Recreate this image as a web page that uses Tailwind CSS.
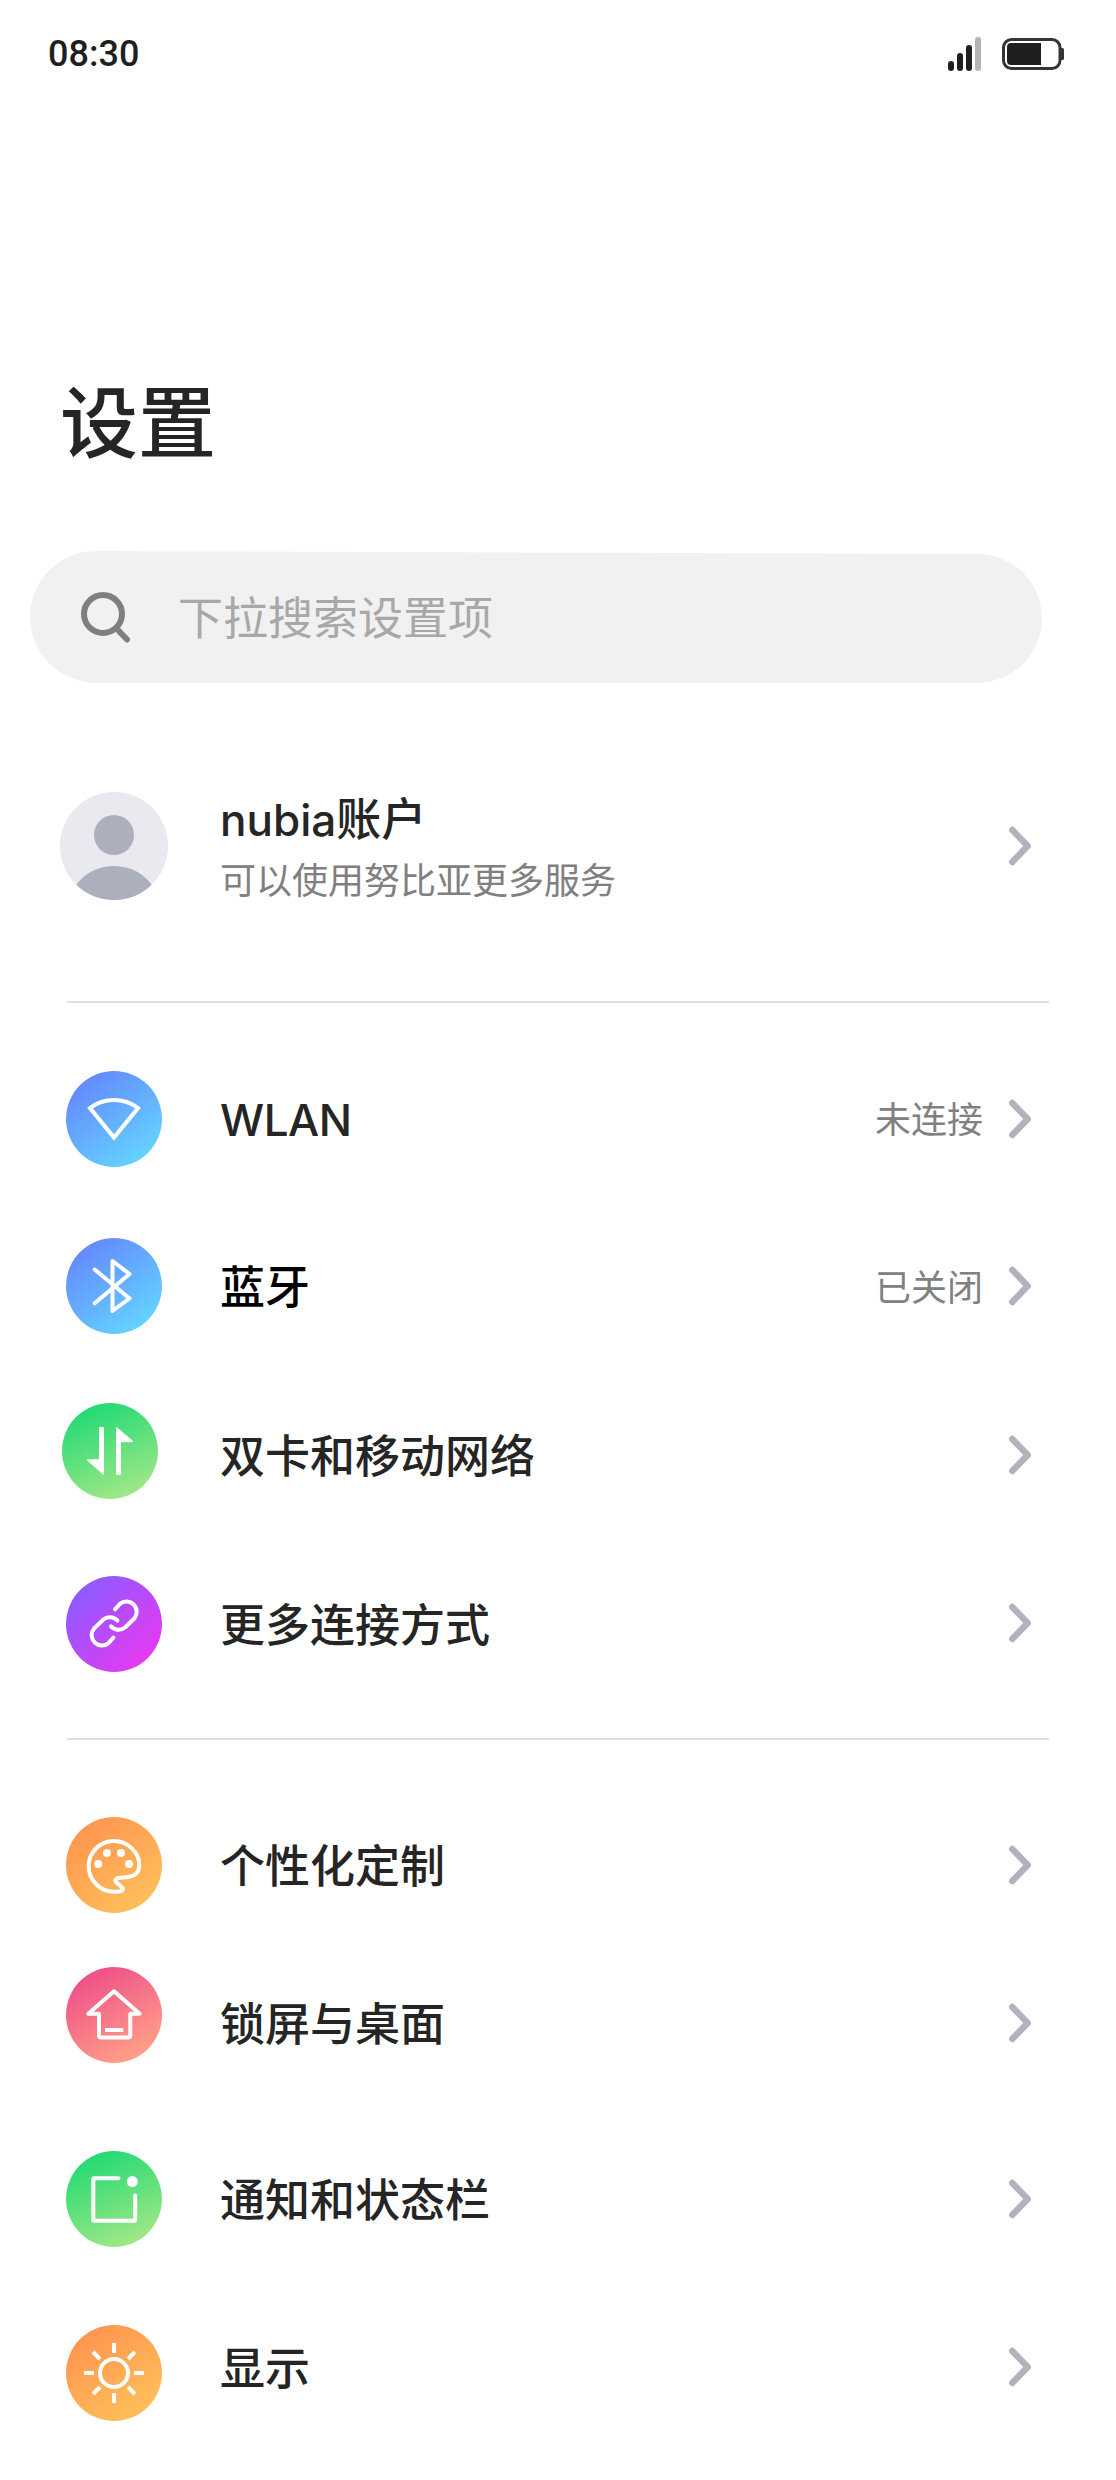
<!DOCTYPE html>
<html lang="zh-CN">
<head>
<meta charset="utf-8">
<title>设置</title>
<script src="https://cdn.jsdelivr.net/npm/@tailwindcss/browser@4"></script>
</head>
<body class="bg-white">
<svg class="absolute w-0 h-0">
  <defs>
    <linearGradient id="blue" x1=".15" y1=".05" x2=".8" y2=".95"><stop offset="0" stop-color="#6486fd"/><stop offset="1" stop-color="#64d5ff"/></linearGradient>
    <linearGradient id="green" x1=".25" y1="0" x2=".65" y2="1"><stop offset="0" stop-color="#1cd973"/><stop offset="1" stop-color="#a3e887"/></linearGradient>
    <linearGradient id="purple" x1=".1" y1=".15" x2=".85" y2=".9"><stop offset="0" stop-color="#8c5cff"/><stop offset="1" stop-color="#e639f0"/></linearGradient>
    <linearGradient id="orange" x1=".15" y1=".1" x2=".75" y2=".95"><stop offset="0" stop-color="#ff9550"/><stop offset="1" stop-color="#ffbf5a"/></linearGradient>
    <linearGradient id="pink" x1=".2" y1=".05" x2=".7" y2=".95"><stop offset="0" stop-color="#ee4e89"/><stop offset="1" stop-color="#ff9f87"/></linearGradient>
    <symbol id="chevron" viewBox="0 0 24 42"><path d="M4.300 5 19.700 21 4.300 37" fill="none" stroke="#b2b1be" stroke-width="6.500" stroke-linecap="round" stroke-linejoin="round"/></symbol>
  </defs>
</svg>
<div class="w-[1116px] h-[2480px] overflow-hidden bg-white flex flex-col text-[#252525] font-[Inter,'Noto_Sans_CJK_SC',sans-serif]">

  <header class="h-[108px] shrink-0 flex items-center justify-between pl-12 pr-[51px]">
    <div class="text-[36px] leading-[40px] font-medium text-[#1f1f1f] font-[Roboto,sans-serif]">08:30</div>
    <div class="flex items-center gap-5">
      <svg class="w-[34px] h-[36px]" viewBox="0 0 34 36">
        <g fill="#1f1f1f"><rect x="0" y="25" width="6" height="10" rx="3"/><rect x="9" y="17" width="6" height="18" rx="3"/><rect x="18" y="9" width="6" height="26" rx="3"/></g>
        <rect x="27" y="1" width="6" height="34" rx="3" fill="#b4b4b4"/>
      </svg>
      <svg class="w-[63px] h-[32px]" viewBox="0 0 63 32">
        <rect x="1.5" y="1.5" width="56.5" height="29" rx="8" fill="none" stroke="#353535" stroke-width="3"/>
        <path d="M9 5H39V27H9a4 4 0 0 1-4-4V9a4 4 0 0 1 4-4Z" fill="#1f1f1f"/>
        <path d="M59 10h1.500a1.500 1.500 0 0 1 1.500 1.500v9a1.500 1.500 0 0 1-1.500 1.500H59Z" fill="#353535"/>
      </svg>
    </div>
  </header>

  <h1 class="mt-[272px] ml-[60px] h-[88px] shrink-0 text-[78px] leading-[88px] font-medium">设置</h1>

  <div class="relative mt-[83px] ml-[30px] w-[1012px] h-[132px] shrink-0 flex items-center">
    <svg class="absolute inset-0 w-full h-full" viewBox="0 0 1012 132"><path d="M65.900 0 947.600 3A64.350 64.350 0 0 1 947.600 131.700H65.900A65.850 65.850 0 0 1 65.900 0Z" fill="#f1f1f1"/></svg>
    <svg class="relative ml-[50px] w-[52px] h-[52px]" viewBox="0 0 52 52" fill="none" stroke="#7f7f7f" stroke-width="6" stroke-linecap="round"><circle cx="23" cy="23" r="19"/><path d="M37.500 38.500 47 48.500"/></svg>
    <span class="relative ml-[46px] pt-1 text-[45px] leading-[52px] text-[#a8a8a8]">下拉搜索设置项</span>
  </div>

  <section class="mt-[59px] h-[208px] shrink-0 flex items-center pl-[60px] pr-[84px]">
    <svg class="w-[108px] h-[108px]" viewBox="0 0 108 108">
      <clipPath id="face"><circle cx="54" cy="54" r="54"/></clipPath>
      <g clip-path="url(#face)"><path fill="#eae9f0" d="M0 0h108v108H0z"/><circle cx="54" cy="43" r="20" fill="#acafbc"/><circle cx="54" cy="121.500" r="47.500" fill="#acafbc"/></g>
    </svg>
    <div class="ml-[52px] pt-[6px] flex-1">
      <div class="text-[45px] leading-[58px] font-medium"><span class="text-[44px]">nubia</span>账户</div>
      <div class="mt-[5px] text-[36px] leading-[54px] text-[#808080]">可以使用努比亚更多服务</div>
    </div>
    <svg class="w-6 h-[42px]"><use href="#chevron"/></svg>
  </section>

  <hr class="mt-[51px] ml-[67px] w-[982px] border-0 h-[2px] shrink-0 bg-[#dfdfdf]">

  <ul class="mt-[33px] shrink-0 text-[45px] leading-[60px] font-medium">
    <li class="h-[166px] flex items-center pl-[66px] pr-[84px]">
      <svg class="w-24 h-24" viewBox="0 0 96 96"><circle cx="48" cy="48" r="48" fill="url(#blue)"/><path d="M24 37A40 40 0 0 1 72 37L48 66.500Z" fill="none" stroke="#fff" stroke-width="4"/></svg>
      <span class="ml-[58px] pt-px flex-1 text-[44px] tracking-[-0.5px]">WLAN</span>
      <span class="mr-[25px] pt-px text-[36px] font-normal text-[#808080]">未连接</span>
      <svg class="w-6 h-[42px]"><use href="#chevron"/></svg>
    </li>
    <li class="h-[168px] flex items-center pl-[66px] pr-[84px]">
      <svg class="w-24 h-24" viewBox="0 0 96 96"><circle cx="48" cy="48" r="48" fill="url(#blue)"/><path d="M28.700 31.500 63.500 60.500 46.500 73V23L63.500 36 28.700 65.300" fill="none" stroke="#fff" stroke-width="4" stroke-linecap="round" stroke-linejoin="round"/></svg>
      <span class="ml-[58px] pt-1 flex-1 text-black">蓝牙</span>
      <span class="mr-[25px] pt-[3px] text-[36px] font-normal text-[#808080]">已关闭</span>
      <svg class="w-6 h-[42px]"><use href="#chevron"/></svg>
    </li>
    <li class="h-[170px] flex items-center pl-[62px] pr-[84px]">
      <svg class="mb-2 w-24 h-24" viewBox="0 0 96 96"><circle cx="48" cy="48" r="48" fill="url(#green)"/><g fill="#fff" stroke="#fff" stroke-width="1" stroke-linejoin="round"><path d="M37.500 24.500h4V71.500L25.500 57.300V56.800h12Z"/><path d="M58.500 71.500h-4V24.500L70.500 38V38.700h-12Z"/></g></svg>
      <span class="ml-[62px] pt-1 flex-1">双卡和移动网络</span>
      <svg class="w-6 h-[42px]"><use href="#chevron"/></svg>
    </li>
    <li class="h-[168px] flex items-center pl-[66px] pr-[84px]">
      <svg class="w-24 h-24" viewBox="0 0 96 96"><circle cx="48" cy="48" r="48" fill="url(#purple)"/><g fill="none" stroke="#fff" stroke-width="4" stroke-linecap="round"><path d="M49 33.300 54.100 27.700A10.300 10.300 0 0 1 68.600 42.100L59.300 51.200A10.300 10.300 0 0 1 45 50.300"/><path d="M49 33.300 54.100 27.700A10.300 10.300 0 0 1 68.600 42.100L59.300 51.200A10.300 10.300 0 0 1 45 50.300" transform="rotate(180 48.200 47.500)"/></g></svg>
      <span class="ml-[58px] pt-[3px] flex-1">更多连接方式</span>
      <svg class="mb-0.5 w-6 h-[42px]"><use href="#chevron"/></svg>
    </li>
  </ul>

  <hr class="mt-[30px] ml-[67px] w-[982px] border-0 h-[2px] shrink-0 bg-[#dfdfdf]">

  <ul class="mt-[46px] shrink-0 text-[45px] leading-[60px] font-medium">
    <li class="h-[158px] flex items-center pl-[66px] pr-[84px]">
      <svg class="w-24 h-24" viewBox="0 0 96 96"><circle cx="48" cy="48" r="48" fill="url(#orange)"/><path d="M48 24C62 24 73.300 35.500 73.300 48C73.300 58 66 60.600 54 60.800C49.500 61 48.300 63.300 50.500 65.500L55.500 69.700C58 72 57 74 53 74.500C51 74.700 49.500 74.700 48 74.700A25.300 25.300 0 0 1 48 24Z" fill="none" stroke="#fff" stroke-width="4"/><g fill="#fff"><circle cx="32.300" cy="47" r="4"/><circle cx="41" cy="36" r="4"/><circle cx="55" cy="36" r="4"/><circle cx="63" cy="47" r="4"/></g></svg>
      <span class="ml-[58px] pt-1 flex-1">个性化定制</span>
      <svg class="w-6 h-[42px]"><use href="#chevron"/></svg>
    </li>
    <li class="h-[160px] flex items-center pl-[66px] pr-[84px]">
      <svg class="mb-[18px] w-24 h-24" viewBox="0 0 96 96"><circle cx="48" cy="48" r="48" fill="url(#pink)"/><path d="M33 46.700H22.300L48 24.300 73.700 46.700H64.300V68.500a2 2 0 0 1-2 2H35a2 2 0 0 1-2-2ZM39 63H57.300" fill="none" stroke="#fff" stroke-width="4" stroke-linejoin="round"/></svg>
      <span class="ml-[58px] pt-0.5 flex-1">锁屏与桌面</span>
      <svg class="mb-0.5 w-6 h-[42px]"><use href="#chevron"/></svg>
    </li>
    <li class="h-[190px] flex items-center pl-[66px] pr-[84px]">
      <svg class="w-24 h-24" viewBox="0 0 96 96"><circle cx="48" cy="48" r="48" fill="url(#green)"/><path d="M52.500 27.300H28.300a1 1 0 0 0-1 1V68.700a1 1 0 0 0 1 1H68.200a1 1 0 0 0 1-1V44.500" fill="none" stroke="#fff" stroke-width="4" stroke-linecap="round"/><circle cx="66.300" cy="30.500" r="5.500" fill="#fff"/></svg>
      <span class="ml-[58px] pt-1 flex-1">通知和状态栏</span>
      <svg class="w-6 h-[42px]"><use href="#chevron"/></svg>
    </li>
    <li class="h-[146px] flex items-center pl-[66px] pr-[84px]">
      <svg class="mt-3 w-24 h-24" viewBox="0 0 96 96"><circle cx="48" cy="48" r="48" fill="url(#orange)"/><g fill="none" stroke="#fff" stroke-width="4"><circle cx="48" cy="48" r="14"/><path d="M48 18V28M48 68V78M18 48H28M68 48H78M27 27 34 34M62 62 69 69M69 27 62 34M34 62 27 69"/></g></svg>
      <span class="ml-[58px] pt-1 flex-1">显示</span>
      <svg class="w-6 h-[42px]"><use href="#chevron"/></svg>
    </li>
  </ul>
</div>
</body>
</html>
